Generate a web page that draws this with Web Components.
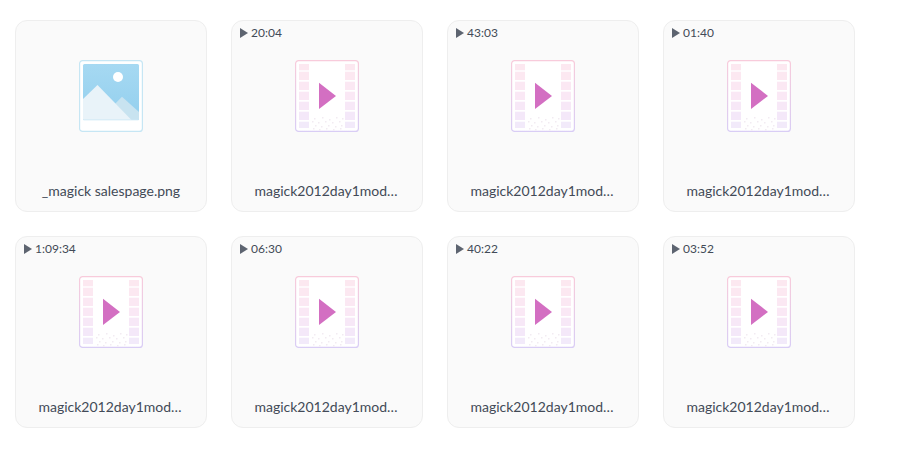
<!DOCTYPE html>
<html>
<head>
<meta charset="utf-8">
<title>Files</title>
<style>
html, body { margin: 0; background: #fff; }
</style>
</head>
<body>
<file-grid>
    <file-card name="_magick salespage.png" kind="image"></file-card>
    <file-card name="magick2012day1mod…" duration="20:04"></file-card>
    <file-card name="magick2012day1mod…" duration="43:03"></file-card>
    <file-card name="magick2012day1mod…" duration="01:40"></file-card>
    <file-card name="magick2012day1mod…" duration="1:09:34"></file-card>
    <file-card name="magick2012day1mod…" duration="06:30"></file-card>
    <file-card name="magick2012day1mod…" duration="40:22"></file-card>
    <file-card name="magick2012day1mod…" duration="03:52"></file-card>
</file-grid>
<script>
const imageIcon = `
<svg width="64" height="72" viewBox="0 0 64 72" xmlns="http://www.w3.org/2000/svg">
    <defs>
        <linearGradient id="sky" x1="0" y1="0" x2="0" y2="1">
            <stop offset="0" stop-color="#a6d9f2"></stop>
            <stop offset="1" stop-color="#93cfee"></stop>
        </linearGradient>
    </defs>
    <rect x="0.6" y="0.6" width="62.8" height="70.8" rx="3" fill="#fff" stroke="#c6e6f4" stroke-width="1.2"></rect>
    <rect x="4" y="4" width="56" height="56" rx="1.5" fill="url(#sky)"></rect>
    <circle cx="39" cy="17" r="5" fill="#fff"></circle>
    <path d="M33 47 L43 36.7 L60 52 V58.5 Q60 60 58.5 60 H44 Z" fill="#c8e3f0"></path>
    <path d="M4 39 L18.500 25 L52.500 60 H5.500 Q4 60 4 58.500 Z" fill="#e9f3f9"></path>
    <rect x="4.500" y="59.500" width="55" height="0.800" fill="#cbe7f5"></rect>
</svg>`;

const videoCells = [4, 11.7, 21.7, 31.7, 41.7, 51.7, 61.7].map((y, i) => {
    const h = (i === 0 || i === 6) ? 6.300 : 8.300;
    const color = ['#fce8f0', '#fce8f1', '#fbe8f3', '#fae8f5', '#f7e8f7', '#f4e8f9', '#f2eafa'][i];
    return `<rect x="4" y="${y}" width="10" height="${h}" fill="${color}"></rect>
    <rect x="50" y="${y}" width="10" height="${h}" fill="${color}"></rect>`;
}).join('');

// scattered speckle under the play mark
const videoDots = [
    [19, 58], [27, 57], [34, 59], [41, 57], [47, 58],
    [17, 61], [23, 62], [30, 61], [37, 62], [44, 61],
    [20, 65], [26, 66], [33, 65], [40, 66], [46, 65],
    [18, 68], [24, 69], [31, 68], [38, 69], [45, 68]
].map(([x, y]) => `<rect x="${x}" y="${y}" width="1.500" height="1.500" fill="#f2ebf2"></rect>`).join('');

const videoIcon = `
<svg width="64" height="72" viewBox="0 0 64 72" xmlns="http://www.w3.org/2000/svg">
    <defs>
        <linearGradient id="edge" x1="0" y1="0" x2="0" y2="1">
            <stop offset="0" stop-color="#f8cbdb"></stop>
            <stop offset="1" stop-color="#d9cdf5"></stop>
        </linearGradient>
    </defs>
    <rect x="0.600" y="0.600" width="62.800" height="70.800" rx="3" fill="#fff" stroke="url(#edge)" stroke-width="1.200"></rect>
    ${videoCells}
    ${videoDots}
    <path d="M24 22.700 L41 36 L24 49 Z" fill="#d36fc2"></path>
</svg>`;

class FileCard extends HTMLElement {

    constructor() {
        super();
        this.attachShadow({mode: 'open'});
    }

    connectedCallback() {
        this.shadowRoot.innerHTML = this.template;
    }

    get template() {
        const duration = this.getAttribute('duration');
        return `
        <style>${this.componentStyle}</style>
        ${duration ? `<div class="duration"><span class="arrow"></span>${duration}</div>` : ''}
        <div class="icon">${this.getAttribute('kind') === 'image' ? imageIcon : videoIcon}</div>
        <div class="name ${duration ? 'cut' : ''}">${this.getAttribute('name')}</div>
        `;
    }

    get componentStyle() {
        return `:host {
            display: flex;
            flex-direction: column;
            align-items: center;
            position: relative;
            box-sizing: border-box;
            width: 192px;
            height: 192px;
            background: #fafafa;
            border: 1px solid #eeeeee;
            border-radius: 12px;
            font-family: Lato, sans-serif;
            color: #424a57;
        }
        .duration {
            position: absolute;
            left: 8px;
            top: 4px;
            display: flex;
            align-items: center;
            font-size: 12px;
            line-height: 16px;
        }
        .arrow {
            width: 0;
            height: 0;
            margin-right: 3px;
            border-left: 8px solid #5d6470;
            border-top: 5.5px solid transparent;
            border-bottom: 5.5px solid transparent;
        }
        .icon {
            margin-top: 39px;
            height: 72px;
            line-height: 0;
        }
        .name {
            margin-top: 50px;
            font-size: 14px;
            line-height: 18px;
            white-space: nowrap;
        }
        .cut {
            padding-right: 2px;
        }`;
    }
}

customElements.define('file-card', FileCard);

class FileGrid extends HTMLElement {

    constructor() {
        super();
        this.attachShadow({mode: 'open'}).innerHTML = `
        <style>
            :host {
                display: grid;
                grid-template-columns: repeat(4, 192px);
                gap: 24px;
                padding: 20px 15px;
            }
        </style>
        <slot></slot>`;
    }
}

customElements.define('file-grid', FileGrid);
</script>
</body>
</html>
